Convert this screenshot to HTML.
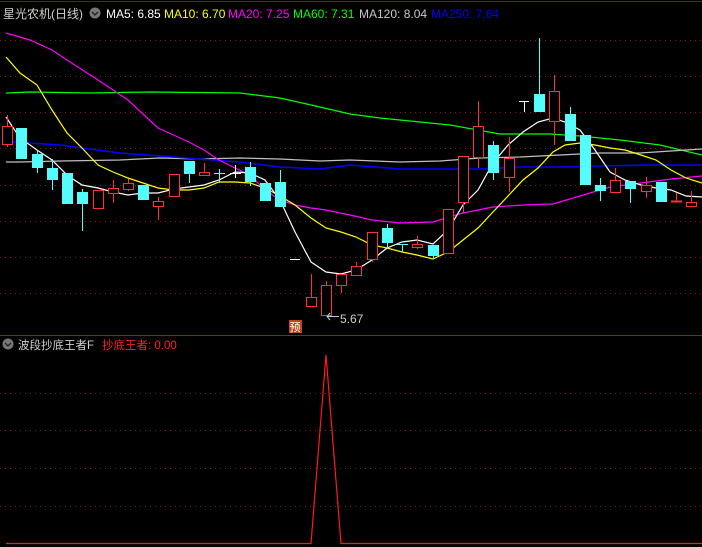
<!DOCTYPE html>
<html><head><meta charset="utf-8"><style>
html,body{margin:0;padding:0;background:#000;width:702px;height:547px;overflow:hidden}
svg{display:block}
text{font-family:"Liberation Sans","Noto Sans CJK SC",sans-serif;font-size:12px}
</style></head><body>
<svg width="702" height="547" viewBox="0 0 702 547" xmlns="http://www.w3.org/2000/svg">
<rect width="702" height="547" fill="#000"/>
<line x1="0" y1="1.5" x2="702" y2="1.5" stroke="#a00" stroke-width="1"/>
<g stroke="#8a1a1a" stroke-width="1" stroke-dasharray="1,4">
<line x1="0" y1="40.5" x2="702" y2="40.5"/><line x1="0" y1="76.5" x2="702" y2="76.5"/>
<line x1="0" y1="112.5" x2="702" y2="112.5"/><line x1="0" y1="148.5" x2="702" y2="148.5"/>
<line x1="0" y1="185.5" x2="702" y2="185.5"/><line x1="0" y1="221.5" x2="702" y2="221.5"/>
<line x1="0" y1="257.5" x2="702" y2="257.5"/><line x1="0" y1="293.5" x2="702" y2="293.5"/>
<line x1="0" y1="393.5" x2="702" y2="393.5"/><line x1="0" y1="430.5" x2="702" y2="430.5"/>
<line x1="0" y1="468.5" x2="702" y2="468.5"/><line x1="0" y1="506.5" x2="702" y2="506.5"/>
</g>
<line x1="0" y1="335.5" x2="702" y2="335.5" stroke="#c00" stroke-width="1"/>
<g fill="none" stroke-width="1.2">
<polyline stroke="#00ff00" points="6,93 30,92 90,93 150,92 240,93 280,98 320,107 350,114 380,118 400,120 450,125 500,134 550,134 580,136 620,140 660,145 702,155"/>
<polyline stroke="#c0c0c0" points="6,162 20,162 60,161 120,160 160,158 200,159 240,158 280,159 320,161 350,160 400,162 440,161 480,158 520,157 560,155 600,153 640,153 702,149"/>
<polyline stroke="#0000ff" stroke-width="1.6" points="6,142 30,143 60,145 90,149 120,153 160,156 200,159 240,162 280,167 320,169 350,165 400,169 440,169 480,169 520,167 560,167 600,166 650,165 702,165"/>
<polyline stroke="#ff00ff" points="6,33 30,40 52,50 67,60 98,80 128,100 158,128 189,142 204,150 219,160 235,168 250,175 265,190 280,200 295,205 311,208 326,210 350,215 372,220 400,223 433,222 463,213 493,207 523,205 553,204 580,196 610,187 641,183 671,179 702,176"/>
<polyline stroke="#ffff00" points="6,57 20,73 37,85 52,110 67,133 82,148 98,165 113,172 128,178 143,183 158,188 174,190 189,190 204,188 219,182 235,182 250,183 265,188 280,196 295,205 311,218 326,228 341,232 356,237 372,245 387,248 402,252 417,255 433,259 448,252 463,240 478,228 493,212 508,196 523,180 538,168 553,152 565,145 580,143 595,145 610,148 625,150 641,155 656,160 671,170 686,178 702,183"/>
<polyline stroke="#ffffff" points="6,117 20,138 37,150 52,160 67,175 82,185 98,188 113,192 128,195 143,193 158,193 174,189 189,187 204,185 219,180 235,172 250,173 265,180 280,200 295,232 311,262 326,272 341,274 356,270 372,260 387,248 402,242 417,240 433,244 448,230 463,205 478,190 493,163 508,145 523,132 538,122 553,118 565,122 580,130 595,150 610,172 625,180 641,185 656,188 671,190 686,196 702,197"/>
</g>
<g stroke="#ff3232" fill="#000" stroke-width="1">
<line x1="7.5" y1="115" x2="7.5" y2="147"/><rect x="2.5" y="126.5" width="10" height="18"/>
<rect x="93.5" y="190.5" width="10" height="18"/>
<line x1="113.5" y1="180" x2="113.5" y2="203"/><rect x="108.5" y="188.5" width="10" height="5"/>
<line x1="128.5" y1="179" x2="128.5" y2="191"/><rect x="123.5" y="183.5" width="10" height="6"/>
<line x1="158.5" y1="197" x2="158.5" y2="220"/><rect x="153.5" y="201.5" width="10" height="5"/>
<rect x="169.5" y="174.5" width="10" height="22"/>
<line x1="204.5" y1="163" x2="204.5" y2="176"/><rect x="199.5" y="172.5" width="10" height="3"/>
<line x1="311.5" y1="274" x2="311.5" y2="306"/><rect x="306.5" y="297.5" width="10" height="9"/>
<line x1="326.5" y1="281" x2="326.5" y2="315"/><rect x="321.5" y="285.5" width="10" height="30"/>
<line x1="341.5" y1="274" x2="341.5" y2="293"/><rect x="336.5" y="274.5" width="10" height="11"/>
<line x1="356.5" y1="262" x2="356.5" y2="275"/><rect x="351.5" y="266.5" width="10" height="9"/>
<line x1="372.5" y1="232" x2="372.5" y2="262"/><rect x="367.5" y="232.5" width="10" height="27"/>
<line x1="417.5" y1="236" x2="417.5" y2="249"/><rect x="412.5" y="244.5" width="10" height="3"/>
<rect x="443.5" y="209.5" width="10" height="44"/>
<line x1="463.5" y1="156" x2="463.5" y2="213"/><rect x="458.5" y="156.5" width="10" height="46"/>
<line x1="478.5" y1="101" x2="478.5" y2="168"/><rect x="473.5" y="126.5" width="10" height="31"/>
<line x1="509.5" y1="137" x2="509.5" y2="192"/><rect x="504.5" y="158.5" width="10" height="19"/>
<line x1="554.5" y1="75" x2="554.5" y2="145"/><rect x="549.5" y="91.5" width="10" height="30"/>
<line x1="615.5" y1="168" x2="615.5" y2="192"/><rect x="610.5" y="180.5" width="10" height="12"/>
<line x1="646.5" y1="177" x2="646.5" y2="198"/><rect x="641.5" y="185.5" width="10" height="6"/>
<line x1="676.5" y1="193" x2="676.5" y2="201"/><line x1="671" y1="201.5" x2="682" y2="201.5" stroke-width="2"/>
<line x1="691.5" y1="191" x2="691.5" y2="202"/><rect x="686.5" y="202.5" width="10" height="4"/>
</g>
<g fill="#54fcfc" stroke="#54fcfc" stroke-width="1">
<rect x="16" y="128" width="11" height="31" stroke="none"/>
<line x1="37.5" y1="150" x2="37.5" y2="173"/><rect x="32" y="154" width="11" height="14" stroke="none"/>
<line x1="52.5" y1="159" x2="52.5" y2="190"/><rect x="47" y="168" width="11" height="12" stroke="none"/>
<rect x="62" y="173" width="11" height="31" stroke="none"/>
<line x1="82.5" y1="189" x2="82.5" y2="231"/><rect x="77" y="192" width="11" height="12" stroke="none"/>
<rect x="138" y="185" width="11" height="15" stroke="none"/>
<line x1="189.5" y1="161" x2="189.5" y2="183"/><rect x="184" y="161" width="11" height="13" stroke="none"/>
<line x1="219.5" y1="169" x2="219.5" y2="183"/><line x1="214" y1="173.5" x2="225" y2="173.5"/>
<line x1="250.5" y1="162" x2="250.5" y2="186"/><rect x="245" y="167" width="11" height="15" stroke="none"/>
<rect x="260" y="183" width="11" height="18" stroke="none"/>
<line x1="280.5" y1="170" x2="280.5" y2="207"/><rect x="275" y="182" width="11" height="25" stroke="none"/>
<line x1="387.5" y1="224" x2="387.5" y2="248"/><rect x="382" y="228" width="11" height="15" stroke="none"/>
<line x1="402.5" y1="244" x2="402.5" y2="252"/><line x1="397" y1="244.5" x2="408" y2="244.5"/>
<line x1="433.5" y1="245" x2="433.5" y2="259"/><rect x="428" y="245" width="11" height="11" stroke="none"/>
<line x1="493.5" y1="141" x2="493.5" y2="180"/><rect x="488" y="145" width="11" height="28" stroke="none"/>
<line x1="539.5" y1="38" x2="539.5" y2="112"/><rect x="534" y="94" width="11" height="18" stroke="none"/>
<line x1="570.5" y1="107" x2="570.5" y2="141"/><rect x="565" y="114" width="11" height="27" stroke="none"/>
<rect x="580" y="135" width="11" height="50" stroke="none"/>
<line x1="600.5" y1="178" x2="600.5" y2="201"/><rect x="595" y="185" width="11" height="6" stroke="none"/>
<line x1="630.5" y1="181" x2="630.5" y2="203"/><rect x="625" y="181" width="11" height="8" stroke="none"/>
<rect x="656" y="182" width="11" height="20" stroke="none"/>
</g>
<g stroke="#fff" stroke-width="1">
<line x1="235.5" y1="165" x2="235.5" y2="178"/><line x1="230" y1="173.5" x2="241" y2="173.5"/>
<line x1="290" y1="259.5" x2="300" y2="259.5"/>
<line x1="519" y1="101.5" x2="529" y2="101.5"/><line x1="524.5" y1="101" x2="524.5" y2="112"/>
</g>
<line x1="327" y1="316.5" x2="339" y2="316.5" stroke="#ccc"/>
<polyline points="330,313 327,316.5 330,320" fill="none" stroke="#ccc"/>
<text x="340" y="323" fill="#ccc">5.67</text>
<rect x="289" y="320" width="13" height="13" fill="#b84a1a"/>
<text x="289.5" y="331" fill="#fff" style="font-size:11px">预</text>
<text x="3" y="18" fill="#d0d0d0" style="font-size:12px">星光农机(日线)</text>
<circle cx="95" cy="13" r="5.5" fill="#777"/>
<polyline points="92,12 95,15 98,12" fill="none" stroke="#222" stroke-width="1.3"/>
<text x="106" y="18" fill="#fff">MA5: 6.85</text>
<text x="164" y="18" fill="#ffff00">MA10: 6.70</text>
<text x="228" y="18" fill="#ff00ff">MA20: 7.25</text>
<text x="293" y="18" fill="#00ff00">MA60: 7.31</text>
<text x="359" y="18" fill="#c8c8c8">MA120: 8.04</text>
<text x="431" y="18" fill="#0000ff">MA250: 7.64</text>
<circle cx="8" cy="344" r="5.5" fill="#777"/>
<polyline points="5,343 8,346 11,343" fill="none" stroke="#222" stroke-width="1.3"/>
<text x="18" y="349" fill="#d0d0d0" style="font-size:11.5px">波段抄底王者F</text>
<text x="102" y="349" fill="#ff2020" style="font-size:11.5px">抄底王者: 0.00</text>
<polyline points="6,543.5 311,543.5 326,355 341,543.5 702,543.5" fill="none" stroke="#ff1a1a" stroke-width="1.2"/>
</svg>
</body></html>
